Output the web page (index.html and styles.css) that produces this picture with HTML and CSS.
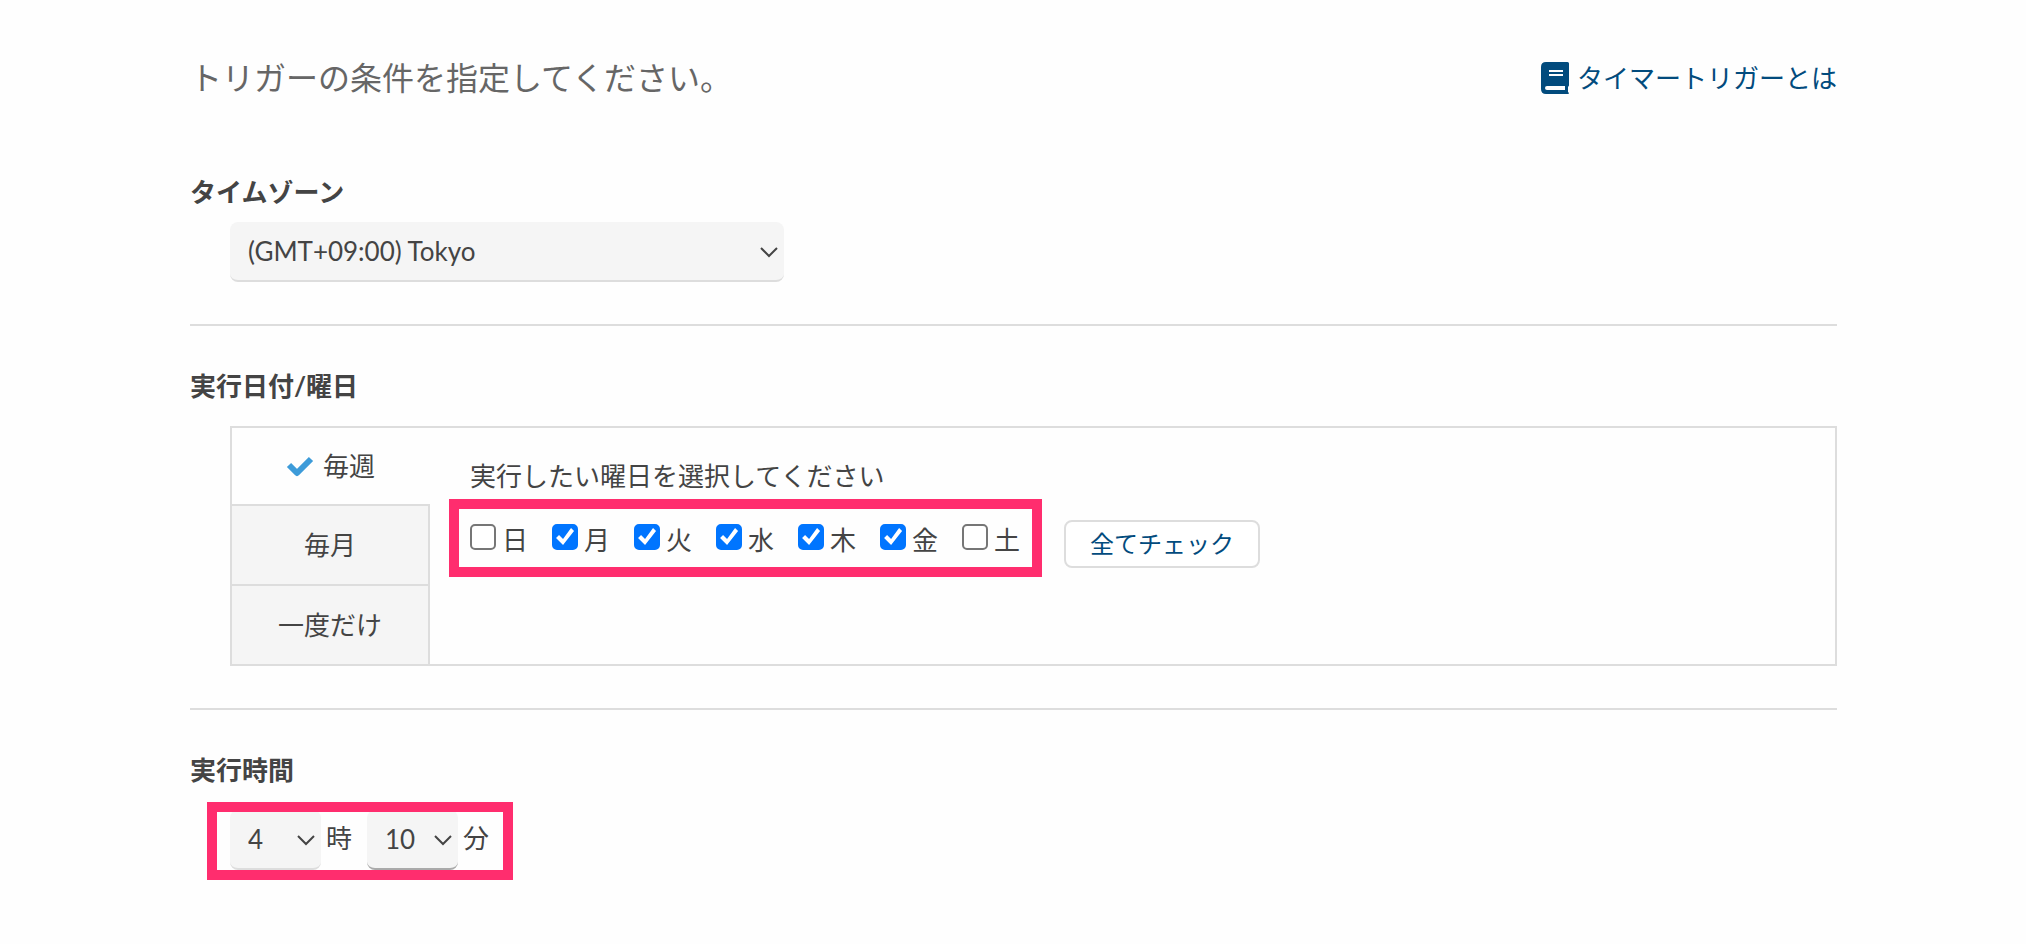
FILE: index.html
```html
<!DOCTYPE html>
<html lang="ja">
<head>
    <meta charset="UTF-8">
    <meta name="viewport" content="width=device-width, initial-scale=1.0">
    <title>タイマートリガー</title>
    <link rel="stylesheet" href="styles.css">
</head>
<body>
    <main class="page">
        <header class="header">
            <h1 class="header-title">トリガーの条件を指定してください。</h1>
            <a href="#" class="help-link">
                <svg class="book-icon" viewBox="0 0 28 32" aria-hidden="true">
                    <path fill="currentColor" fill-rule="evenodd" d="M5 0H26.500Q28 0 28 1.500V23.500L27 25V30L28 31Q28 32 27 32H5Q0 32 0 27V5Q0 0 5 0ZM8 8V10H22V8ZM8 12V14H22V12ZM6 24Q4 24 4 26Q4 28 6 28H24V24Z"/>
                </svg>
                <span>タイマートリガーとは</span>
            </a>
        </header>

        <section class="section">
            <label class="section-title" for="timezone">タイムゾーン</label>
            <div class="section-body">
                <div class="select select-wide">
                    <select id="timezone">
                        <option>(GMT+09:00) Tokyo</option>
                    </select>
                    <svg class="chevron" viewBox="0 0 18 11" aria-hidden="true"><path d="M1 1l8 8 8-8"/></svg>
                </div>
            </div>
        </section>

        <section class="section">
            <h2 class="section-title">実行日付/曜日</h2>
            <div class="section-body schedule">
                <div class="tabs">
                    <button type="button" class="tab active">
                        <svg class="check-icon" viewBox="0 0 26 20" aria-hidden="true"><path d="M2 9l8 8L24 3"/></svg>
                        毎週
                    </button>
                    <button type="button" class="tab">毎月</button>
                    <button type="button" class="tab">一度だけ</button>
                </div>
                <div class="panel">
                    <p class="panel-text">実行したい曜日を選択してください</p>
                    <div class="day-row">
                        <div class="days highlight">
                            <label class="day"><input type="checkbox">日</label>
                            <label class="day"><input type="checkbox" checked>月</label>
                            <label class="day"><input type="checkbox" checked>火</label>
                            <label class="day"><input type="checkbox" checked>水</label>
                            <label class="day"><input type="checkbox" checked>木</label>
                            <label class="day"><input type="checkbox" checked>金</label>
                            <label class="day"><input type="checkbox">土</label>
                        </div>
                        <button type="button" class="check-all">全てチェック</button>
                    </div>
                </div>
            </div>
        </section>

        <section class="section">
            <h2 class="section-title">実行時間</h2>
            <div class="section-body time-body">
                <div class="time highlight">
                    <div class="select">
                        <select id="hour">
                            <option>4</option>
                        </select>
                        <svg class="chevron" viewBox="0 0 18 11" aria-hidden="true"><path d="M1 1l8 8 8-8"/></svg>
                    </div>
                    <label for="hour">時</label>
                    <div class="select">
                        <select id="minute" class="hovered">
                            <option>10</option>
                        </select>
                        <svg class="chevron" viewBox="0 0 18 11" aria-hidden="true"><path d="M1 1l8 8 8-8"/></svg>
                    </div>
                    <label for="minute">分</label>
                </div>
            </div>
        </section>
    </main>
</body>
</html>
```
FILE: styles.css
```css
* {
    box-sizing: border-box;
}
body {
    margin: 0;
    background-color: #fefefe;
    color: #444;
    font-family: Lato, "Noto Sans CJK JP", sans-serif;
    font-size: 26px;
    line-height: 40px;
}
h1, h2, p {
    margin: 0;
}
button, select {
    font: inherit;
    color: inherit;
}
.page {
    margin: 0 189px 0 190px;
    padding: 58px 0 56px;
}
.header {
    display: flex;
    align-items: center;
    justify-content: space-between;
    margin-bottom: 34px;
}
.header-title {
    color: #666;
    font-size: 32px;
    font-weight: normal;
}
.help-link {
    display: flex;
    align-items: center;
    gap: 8px;
    color: #024b7d;
    text-decoration: none;
}
.book-icon {
    width: 28px;
    height: 32px;
}
.section {
    padding: 40px 0 42px;
    border-bottom: 2px solid #ddd;
}
.section:last-child {
    border-bottom: none;
}
.section-title {
    display: block;
    font-size: 26px;
    font-weight: bold;
}
.section-body {
    margin: 10px 0 0 40px;
}
.select {
    position: relative;
    width: 91px;
}
.select-wide {
    width: 554px;
}
.select select {
    appearance: none;
    display: block;
    width: 100%;
    height: 60px;
    padding: 0 18px;
    border: none;
    border-bottom: 2px solid #ddd;
    border-radius: 8px;
    background-color: #f5f5f5;
}
.select .hovered {
    border-bottom-color: #aaa;
}
.chevron {
    position: absolute;
    top: 25px;
    right: 6px;
    width: 18px;
    height: 11px;
    fill: none;
    stroke: #444;
    stroke-width: 2;
    pointer-events: none;
}
.schedule {
    display: flex;
    margin-top: 20px;
    border: 2px solid #ddd;
}
.tabs {
    display: flex;
    flex-direction: column;
    width: 198px;
}
.tab {
    display: flex;
    align-items: center;
    justify-content: center;
    gap: 10px;
    height: 80px;
    padding: 0;
    border: solid #ddd;
    border-width: 2px 2px 0 0;
    background-color: #f5f5f5;
    cursor: pointer;
}
.tab.active {
    height: 76px;
    border: none;
    background-color: transparent;
}
.check-icon {
    width: 26px;
    height: 20px;
    overflow: visible;
    fill: none;
    stroke: #3d9bd9;
    stroke-width: 6;
    stroke-linejoin: round;
}
.panel {
    flex: 1;
    padding: 28px 40px;
}
.panel-text {
    margin-bottom: 24px;
}
.day-row {
    display: flex;
    align-items: flex-start;
    gap: 44px;
}
.highlight {
    position: relative;
}
/* marker frame */
.highlight::after {
    content: "";
    position: absolute;
    inset: -21px -22px -17px -21px;
    border: 10px solid #ff2d6e;
    pointer-events: none;
}
.days {
    display: flex;
    gap: 24px;
}
.day {
    display: flex;
    align-items: flex-start;
    gap: 6px;
}
.day input {
    appearance: none;
    width: 26px;
    height: 26px;
    margin: 4px 0 0;
    border: 2px solid #767676;
    border-radius: 5px;
    background-color: #fff;
}
.day input:checked {
    border-color: #0075ff;
    background-color: #0075ff;
}
.day input:checked::before {
    content: "";
    display: block;
    width: 22px;
    height: 22px;
    background-color: #fff;
    clip-path: polygon(2px 12px, 5px 9px, 9px 13px, 17px 2px, 20px 5px, 9px 19px);
}
.check-all {
    height: 48px;
    padding: 0 24px;
    border: 2px solid #ddd;
    border-radius: 8px;
    background-color: #fff;
    color: #024b7d;
    font-size: 24px;
    cursor: pointer;
}
.time-body {
    margin-top: 20px;
}
.time {
    display: inline-flex;
    align-items: center;
    gap: 5px;
}
.time label {
    padding-bottom: 4px;
}
.time label + .select {
    margin-left: 10px;
}
.time.highlight::after {
    inset: -8px -24px -10px -23px;
}
```
